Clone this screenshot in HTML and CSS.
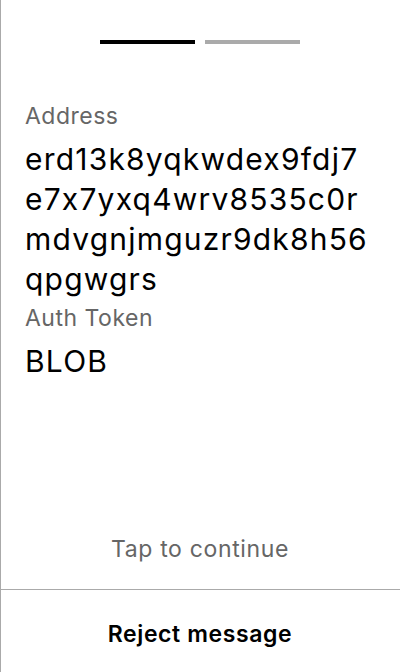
FILE: index.html
```html
<!DOCTYPE html>
<html>
<head>
<meta charset="utf-8">
<link rel="stylesheet" href="styles.css">
</head>
<body>
<div class="screen">
  <div class="progress">
    <div class="bar bar-active"></div>
    <div class="bar bar-inactive"></div>
  </div>
  <div class="content">
    <div class="label">Address</div>
    <div class="value">
      <span class="line">erd13k8yqkwdex9fdj7</span>
      <span class="line">e7x7yxq4wrv8535c0r</span>
      <span class="line">mdvgnjmguzr9dk8h56</span>
      <span class="line">qpgwgrs</span>
    </div>
    <div class="label label-spaced">Auth Token</div>
    <div class="value">BLOB</div>
  </div>
  <div class="tap">Tap to continue</div>
  <div class="reject">Reject message</div>
</div>
</body>
</html>
```
FILE: styles.css
```css
html, body {
  margin: 0;
  padding: 0;
  background: #fff;
}
body {
  font-family: Inter, "Noto Sans", sans-serif;
  font-feature-settings: "calt" 0;
}
.screen {
  box-sizing: border-box;
  width: 400px;
  height: 672px;
  border-left: 1px solid #aaaaaa;
  display: flex;
  flex-direction: column;
}
.progress {
  display: flex;
  justify-content: center;
  gap: 10px;
  padding-top: 40px;
  margin-left: -1px;
}
.bar {
  width: 95px;
  height: 4px;
}
.bar-active { background: #000; }
.bar-inactive { background: #aaaaaa; }
.content {
  padding: 57px 24px 0 24px;
  flex: 1;
}
.label {
  font-size: 23px;
  line-height: 30px;
  letter-spacing: 0.5px;
  color: #666666;
  margin-bottom: 8px;
}
.label-spaced { margin-top: 4px; }
.value {
  font-size: 30px;
  line-height: 40px;
  letter-spacing: 1.2px;
  color: #000;
}
.line {
  display: block;
  white-space: nowrap;
}
.tap {
  text-align: center;
  font-size: 23px;
  line-height: 28px;
  letter-spacing: 0.65px;
  color: #666666;
  padding-bottom: 26px;
  margin-left: -1px;
}
.reject {
  border-top: 1px solid #aaaaaa;
  height: 83px;
  box-sizing: border-box;
  padding-top: 5px;
  display: flex;
  align-items: center;
  justify-content: center;
  font-size: 23px;
  line-height: 28px;
  letter-spacing: 0.6px;
  font-weight: 600;
  color: #000;
  margin-left: -1px;
}
```
